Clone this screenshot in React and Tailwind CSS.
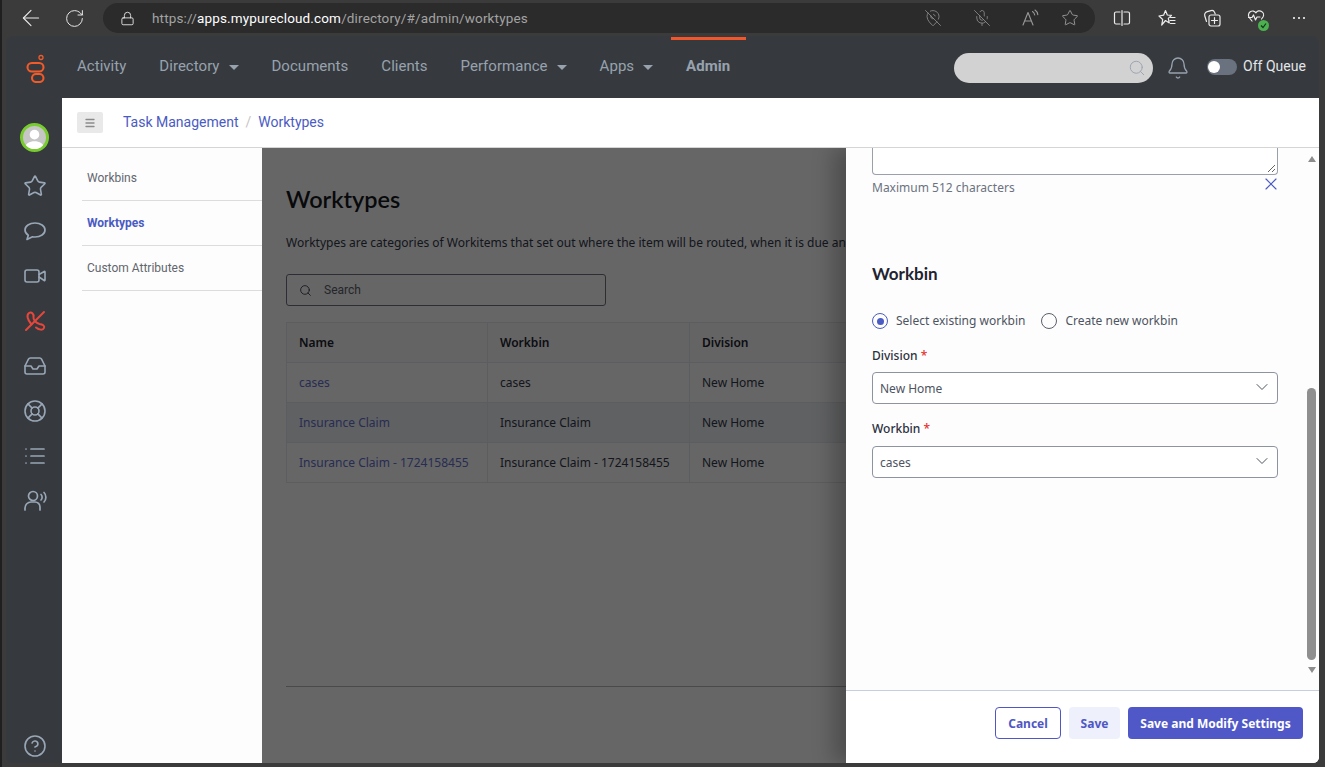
import { ArrowLeft, ChevronDown, CircleHelp, Lock, RotateCw, Search, Star, Video, Bell, X, Menu, Inbox, LifeBuoy, List, MicOff, MapPinOff } from 'lucide-react';

const navItems = [
  { label: 'Activity' },
  { label: 'Directory', caret: true },
  { label: 'Documents' },
  { label: 'Clients' },
  { label: 'Performance', caret: true },
  { label: 'Apps', caret: true },
];

const rows = [
  { name: 'cases', workbin: 'cases', division: 'New Home' },
  { name: 'Insurance Claim', workbin: 'Insurance Claim', division: 'New Home', shaded: true },
  { name: 'Insurance Claim - 1724158455', workbin: 'Insurance Claim - 1724158455', division: 'New Home' },
];

const Caret = () => (
  <span className="ml-[9px] mt-[3px] h-0 w-0 border-x-[5px] border-t-[5px] border-x-transparent border-t-[#98a2ae]" />
);

const GenesysLogo = () => (
  <svg width="26" height="32" viewBox="0 0 26 32" fill="none" stroke="#f15a29" strokeWidth="2.1">
    <circle cx="20" cy="6.5" r="2" strokeWidth="1.3" />
    <rect x="6.5" y="12" width="16" height="8.5" rx="4.25" />
    <rect x="11" y="23" width="11.5" height="8" rx="4" />
  </svg>
);

const ChatBubble = () => (
  <svg width="24" height="24" viewBox="0 0 24 24" fill="none" stroke="currentColor" strokeWidth="1.7" strokeLinejoin="round">
    <path d="M12 4C6.5 4 2 7 2 11c0 2.2 1.3 4 3.3 5.3L4 20.5l5.5-2.7c.8.1 1.6.2 2.5.2 5.5 0 10-3 10-7s-4.5-7-10-7z" />
  </svg>
);

const PhoneOff = () => (
  <svg width="24" height="24" viewBox="0 0 24 24" fill="none" stroke="#e8463a" strokeWidth="2" strokeLinecap="round" strokeLinejoin="round">
    <path d="M3 21 21 3" />
    <path d="M8.5 15.5C4 10 3.5 6 6 4c2.5-1.5 5 1 4.5 4-.5 3 2.5 6 6 7 3 .5 5.5 1.5 4.5 4-1 2.5-5 2-8-.5" />
  </svg>
);

const Agent = () => (
  <svg width="24" height="24" viewBox="0 0 24 24" fill="none" stroke="#98a6b5" strokeWidth="1.7" strokeLinecap="round">
    <circle cx="10" cy="7" r="4.5" />
    <path d="M2 21v-2a6 6 0 0 1 6-6h4a5 5 0 0 1 5 5v3" />
    <path d="M18 5.5c1.5 1.5 1.5 4 0 5.5M21 3.5c2.5 2.5 2.5 7 0 9.5" />
  </svg>
);

const ReadAloud = () => (
  <svg width="18" height="18" viewBox="0 0 18 18" fill="none" stroke="#9a9a9a" strokeWidth="1.1" strokeLinecap="round" strokeLinejoin="round">
    <path d="M2 16 7 3.5 12 16M3.8 12h6.4" />
    <path d="M11.5 2.5c1.2.8 2 2 2.2 3.5M14 1c1.6 1.1 2.6 2.7 2.8 4.6" />
  </svg>
);

const SplitScreen = () => (
  <svg width="18" height="18" viewBox="0 0 18 18" fill="none" stroke="#ececec" strokeWidth="1.2" strokeLinecap="round">
    <path d="M7 3H3a1.5 1.5 0 0 0-1.5 1.5v9A1.5 1.5 0 0 0 3 15h4M11 3h4a1.5 1.5 0 0 1 1.5 1.5v9A1.5 1.5 0 0 1 15 15h-4M9 1.5v15" />
  </svg>
);

const Favorites = () => (
  <svg width="18" height="18" viewBox="0 0 18 18" fill="none" stroke="#ececec" strokeWidth="1.2" strokeLinecap="round" strokeLinejoin="round">
    <path d="M7.5 1.5 9.3 6l4.2.4-3.2 3 1 4.6-3.8-2.5L3.7 16l1-5.5L1 7l4.6-.8z" />
    <path d="M12.5 8.5h4.5M12 11.5h5M12.5 14.5h4.5" />
  </svg>
);

const Collections = () => (
  <svg width="18" height="18" viewBox="0 0 18 18" fill="none" stroke="#ececec" strokeWidth="1.2" strokeLinecap="round" strokeLinejoin="round">
    <path d="M3.5 12.5 1.8 7a3.5 3.5 0 0 1 2.4-4.4L8 1.6a3 3 0 0 1 3.6 1.8l.6 1.6" />
    <rect x="6" y="6" width="11" height="11" rx="2" />
    <path d="M11.5 8.5v6M8.5 11.5h6" />
  </svg>
);

const Health = () => (
  <div className="relative h-[18px] w-[18px]">
    <svg width="18" height="18" viewBox="0 0 18 18" fill="none" stroke="#ececec" strokeWidth="1.2" strokeLinecap="round" strokeLinejoin="round">
      <path d="M5 12 2.2 8.5A4 4 0 0 1 9 3.8 4 4 0 0 1 16 8l-1.5 2" />
      <path d="M1.5 8.5h3.5L6.5 6l2 5 1.5-3h3" />
    </svg>
    <span className="absolute bottom-[-4px] right-[-4px] flex h-[11px] w-[11px] items-center justify-center rounded-full bg-[#4caf50]">
      <svg width="7" height="7" viewBox="0 0 7 7" fill="none" stroke="#12361a" strokeWidth="1.2">
        <path d="M1 3.5 3 5.5 6 1.5" />
      </svg>
    </span>
  </div>
);

const SideIcon = ({ children }) => (
  <div className="flex h-[45px] w-full items-center justify-center">{children}</div>
);

const Select = ({ value }) => (
  <div className="flex h-8 items-center justify-between rounded-[4px] border border-[#8d93a0] bg-white pl-[7px] pr-[5px] text-[12px] text-[#4e5461]">
    <span className="mt-px">{value}</span>
    <ChevronDown size={20} strokeWidth={1.2} className="-mt-[2px] text-[#4e5461]" />
  </div>
);

const Th = ({ children }) => (
  <div className="flex items-center border-r border-[#e4e9f0] pl-3 text-[12px] font-semibold text-[#1f2430]">{children}</div>
);

const Td = ({ children, link }) => (
  <div className={`flex items-center border-r border-[#e4e9f0] pl-3 text-[12px] ${link ? 'text-[#6470d0]' : 'text-[#33384a]'}`}>{children}</div>
);

export default function App() {
  return (
    <div className="flex h-[767px] w-[1325px] flex-col overflow-hidden border-l-2 border-[#1f1f1f] bg-[#3b3b3b] font-['Noto_Sans',sans-serif]">
      {/* browser toolbar */}
      <div className="flex h-9 shrink-0 items-center pl-4 text-[#ececec]">
        <ArrowLeft size={26} strokeWidth={1} />
        <RotateCw size={21} strokeWidth={1.1} className="ml-5" />
        <div className="ml-[18px] flex h-[30px] w-[992px] items-center rounded-full bg-[#2b2b2b] pl-[17px] font-['Roboto',sans-serif] text-[13.5px]">
          <Lock size={15} strokeWidth={1.4} />
          <span className="ml-[17px] tracking-[0.15px] text-[#a3a3a3]">
            https://<span className="text-white">apps.mypurecloud.com</span>/directory/#/admin/worktypes
          </span>
          <div className="ml-auto flex items-center pr-4 text-[#8f8f8f]">
            <MapPinOff size={18} strokeWidth={1.1} />
            <MicOff size={18} strokeWidth={1.1} className="ml-[31px]" />
            <div className="ml-[30px]"><ReadAloud /></div>
            <Star size={18} strokeWidth={1.1} className="ml-[22px] text-[#a8a8a8]" />
          </div>
        </div>
        <div className="ml-[18px] flex items-center">
          <SplitScreen />
          <div className="ml-[27px]"><Favorites /></div>
          <div className="ml-[27px]"><Collections /></div>
          <div className="ml-[26px]"><Health /></div>
          <div className="ml-[28px] flex gap-[3px]">
            <span className="h-[2px] w-[2px] rounded-full bg-white" />
            <span className="h-[2px] w-[2px] rounded-full bg-white" />
            <span className="h-[2px] w-[2px] rounded-full bg-white" />
          </div>
        </div>
      </div>

      <div className="mb-1 ml-1 mr-[6px] flex min-h-0 flex-1 flex-col overflow-hidden rounded-t-lg rounded-b-md bg-[#363a3f]">
        {/* top nav */}
        <div className="flex h-[62px] shrink-0 items-center font-['Roboto',sans-serif] text-[15px] tracking-[0.03px] text-[#98a2ae]">
          <div className="ml-[15px] w-[56px]"><GenesysLogo /></div>
          {navItems.map((item) => (
            <div key={item.label} className="mb-[2px] flex items-center pr-[33px]">
              {item.label}
              {item.caret && <Caret />}
            </div>
          ))}
          <div className="relative flex h-full items-center">
            <span className="absolute left-[-15px] top-[1px] h-[3px] w-[75px] bg-[#f2562b]" />
            <span className="mb-[2px] font-bold">Admin</span>
          </div>
          <div className="ml-auto flex items-center pr-[13px]">
            <div className="mt-[2px] flex h-[30px] w-[199px] items-center justify-end rounded-full bg-[#d2d2d2] pr-[7px] text-[#9aa5b1]">
              <Search size={18} strokeWidth={1.3} />
            </div>
            <Bell size={24} strokeWidth={1.3} className="ml-[13px] mt-[2px]" />
            <div className="ml-[17px] flex h-4 w-[30px] items-center rounded-full bg-[#6a7280]">
              <span className="h-3 w-3 translate-x-[1px] rounded-full bg-white" />
            </div>
            <span className="mb-[2px] ml-[6px] text-[14px] text-[#e4e6e8]">Off Queue</span>
          </div>
        </div>

        <div className="flex min-h-0 flex-1">
          {/* icon rail */}
          <div className="flex w-[56px] shrink-0 flex-col items-center pl-[2px] text-[#98a6b5]">
            <div className="-ml-[2px] mb-[11px] mt-[25px] flex h-[29px] w-[29px] items-center justify-center rounded-full border-[3px] border-[#78cc2d] bg-[#c6c6c6]">
              <svg width="23" height="23" viewBox="0 0 24 24" fill="white" className="rounded-full">
                <circle cx="12" cy="9" r="5" />
                <path d="M2 24c0-6 5-8 10-8s10 2 10 8z" />
              </svg>
            </div>
            <SideIcon><Star size={24} strokeWidth={1.6} /></SideIcon>
            <SideIcon><ChatBubble /></SideIcon>
            <SideIcon><Video size={24} strokeWidth={1.6} /></SideIcon>
            <SideIcon><PhoneOff /></SideIcon>
            <SideIcon><Inbox size={24} strokeWidth={1.6} /></SideIcon>
            <SideIcon><LifeBuoy size={24} strokeWidth={1.6} /></SideIcon>
            <SideIcon><List size={24} strokeWidth={1.7} /></SideIcon>
            <SideIcon><Agent /></SideIcon>
            <div className="mb-[5px] mt-auto"><CircleHelp size={24} strokeWidth={1.6} /></div>
          </div>

          <div className="flex min-w-0 flex-1 flex-col bg-white">
            {/* breadcrumb */}
            <div className="flex h-[50px] shrink-0 items-center border-b border-[#d5d5d5] pl-[15px] font-['Roboto',sans-serif] text-[14px] text-[#4a5bc4]">
              <div className="flex h-[21px] w-[26px] items-center justify-center rounded-[2px] bg-[#e9e9e9] text-[#8a8a8a]">
                <Menu size={12} strokeWidth={2.6} />
              </div>
              <span className="ml-5">Task Management</span>
              <span className="mx-[7px] text-[#c5c5c5]">/</span>
              <span>Worktypes</span>
            </div>

            <div className="relative flex min-h-0 flex-1 overflow-hidden">
              {/* section nav */}
              <div className="w-[200px] shrink-0 bg-[#fdfdfd] pl-5 font-['Roboto',sans-serif] text-[12px] text-[#62666e]">
                <div className="flex h-[53px] items-center border-b border-[#dcdcdc] pl-[5px] pt-[7px]">Workbins</div>
                <div className="flex h-[45px] items-center border-b border-[#dcdcdc] pl-[5px] font-bold text-[#4a5bc4]">Worktypes</div>
                <div className="flex h-[45px] items-center border-b border-[#dcdcdc] pl-[5px]">Custom Attributes</div>
              </div>

              {/* page behind the overlay */}
              <div className="relative min-w-0 flex-1 overflow-hidden px-6 pt-[35px]">
                <h1 className="font-['Lato',sans-serif] text-[23.5px] font-semibold leading-[32px] text-[#16181d]">Worktypes</h1>
                <p className="mt-[19px] whitespace-nowrap text-[12px] leading-[18px] text-[#33384a]">
                  Worktypes are categories of Workitems that set out where the item will be routed, when it is due and how it should be handled.
                </p>
                <div className="mt-[22px] flex h-8 w-[320px] items-center rounded-[3px] border border-[#6f7480] pl-[12px] font-['Roboto',sans-serif] text-[12px] text-[#5b606b]">
                  <Search size={13} strokeWidth={1.6} className="text-[#33384a]" />
                  <span className="ml-3">Search</span>
                </div>
                <div className="mt-[16px] w-[800px] border-l border-t border-[#e4e9f0]">
                  <div className="grid h-10 grid-cols-[201px_202px_1fr] border-b border-[#e4e9f0] bg-[#fafafa]">
                    <Th>Name</Th>
                    <Th>Workbin</Th>
                    <Th>Division</Th>
                  </div>
                  {rows.map((row) => (
                    <div key={row.name} className={`grid h-10 grid-cols-[201px_202px_1fr] border-b border-[#e4e9f0] ${row.shaded ? 'bg-[#f0f2f6]' : ''}`}>
                      <Td link>{row.name}</Td>
                      <Td>{row.workbin}</Td>
                      <Td>{row.division}</Td>
                    </div>
                  ))}
                </div>
                <div className="absolute bottom-[76px] left-6 right-0 border-t border-[#b8b8b8]" />
                <div className="absolute inset-0 bg-black/60" />
              </div>

              {/* drawer */}
              <div className="absolute inset-y-0 right-0 flex w-[473px] flex-col bg-[#fdfdfd] shadow-[-12px_0_20px_rgba(0,0,0,0.25)]">
                <div className="relative min-h-0 flex-1">
                  <div className="w-[458px] pl-[26px]">
                    <div className="relative h-[27px] w-[406px] rounded-b-[4px] border-x border-b border-[#9a9fab] bg-white">
                      <svg width="9" height="9" viewBox="0 0 9 9" stroke="#666" className="absolute bottom-[1px] right-[1px]">
                        <path d="M1 8 8 1M5 8l3-3" />
                      </svg>
                    </div>
                    <div className="flex h-[25px] w-[406px] items-start justify-between">
                      <span className="pt-1 text-[12px] leading-[18px] text-[#6b7280]">Maximum 512 characters</span>
                      <X size={20} strokeWidth={1.4} className="-mr-[3px] -mt-px text-[#4a5bc4]" />
                    </div>
                    <h2 className="mt-[63px] font-['Lato',sans-serif] text-[17px] font-bold leading-[22px] text-[#1f2430]">Workbin</h2>
                    <div className="mt-[27px] flex items-center text-[12px] text-[#4e5461]">
                      <span className="flex h-4 w-4 items-center justify-center rounded-full border border-[#4a5bc4]">
                        <span className="h-[7px] w-[7px] rounded-full bg-[#4a5bc4]" />
                      </span>
                      <span className="ml-2">Select existing workbin</span>
                      <span className="ml-4 h-4 w-4 rounded-full border border-[#5a5f6b]" />
                      <span className="ml-2">Create new workbin</span>
                    </div>
                    <div className="w-[406px]">
                      <div className="mb-[7px] mt-[17px] text-[12px] font-medium leading-[18px] text-[#2c3140]">
                        Division <span className="text-[#e5322d]">*</span>
                      </div>
                      <Select value="New Home" />
                      <div className="mb-2 mt-4 text-[12px] font-medium leading-[18px] text-[#2c3140]">
                        Workbin <span className="text-[#e5322d]">*</span>
                      </div>
                      <Select value="cases" />
                    </div>
                  </div>
                  {/* scrollbar */}
                  <div className="absolute inset-y-0 right-[3px] flex w-[9px] flex-col items-center">
                    <span className="mt-2 h-0 w-0 border-x-[4.5px] border-b-[6px] border-x-transparent border-b-[#8d8d8d]" />
                    <span className="mt-[226px] h-[272px] w-[9px] shrink-0 rounded-full bg-[#8f8f8f]" />
                    <span className="mt-[7px] h-0 w-0 border-x-[4.5px] border-t-[6px] border-x-transparent border-t-[#8d8d8d]" />
                  </div>
                </div>
                {/* drawer footer */}
                <div className="flex h-[73px] shrink-0 items-center justify-end gap-2 border-t border-[#c6cfde] bg-white pb-2 pr-4 text-[12px] font-bold">
                  <button className="flex h-8 w-[66px] items-center justify-center rounded-[4px] border border-[#4f57c5] pt-px text-[#4f57c5]">Cancel</button>
                  <button className="flex h-8 w-[51px] items-center justify-center rounded-[4px] bg-[#eef0fc] pt-px text-[#4f57c5]">Save</button>
                  <button className="flex h-8 w-[175px] items-center justify-center rounded-[4px] bg-[#5058c8] pt-px text-white">Save and Modify Settings</button>
                </div>
              </div>
            </div>
          </div>
        </div>
      </div>
    </div>
  );
}
